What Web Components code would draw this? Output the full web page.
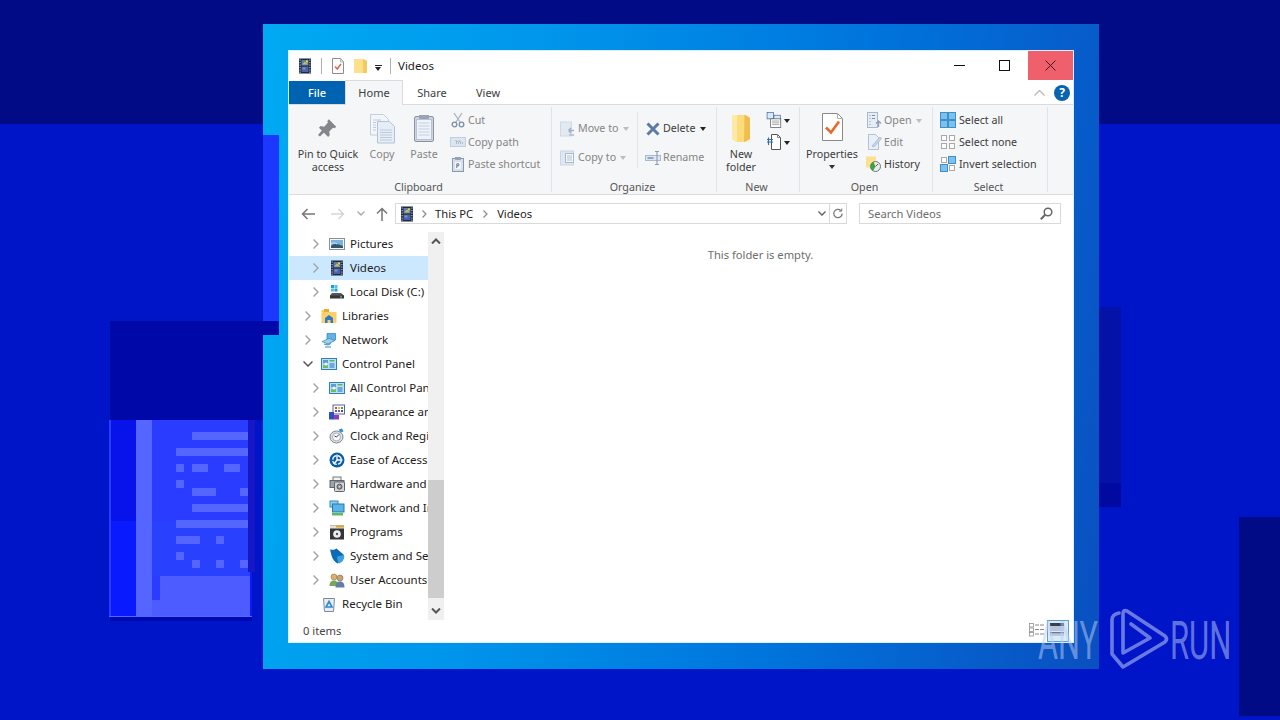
<!DOCTYPE html>
<html lang="en">
<head>
<meta charset="utf-8">
<title>Videos</title>
<style>
html,body{margin:0;height:100%;overflow:hidden;background:#0015c8;}
body{font:11.5px/1.2 "Noto Sans","Open Sans",sans-serif;color:#3c3c3c;}
</style>
</head>
<body>
<desk-top>
	<explorer-window slot="window">
		<title-bar>Videos</title-bar>
		<ribbon-tabs></ribbon-tabs>
		<ribbon-panel>
			<ribbon-group label="Clipboard" style="--w:263px;--pl:3px">
				<big-button icon="pin" width="72">Pin to Quick<br>access</big-button>
				<big-button icon="copy" width="36" off>Copy</big-button>
				<big-button icon="paste" width="48" off>Paste</big-button>
				<small-stack style="margin-left:2px">
					<small-button icon="cut" off>Cut</small-button>
					<small-button icon="copypath" off>Copy path</small-button>
					<small-button icon="pasteshort" off>Paste shortcut</small-button>
				</small-stack>
			</ribbon-group>
			<ribbon-group label="Organize" style="--w:165px;--pl:8px">
				<small-stack tall style="width:77px">
					<small-button icon="moveto" off arrow>Move to</small-button>
					<small-button icon="copyto" off arrow>Copy to</small-button>
				</small-stack>
				<group-sep></group-sep>
				<small-stack tall style="margin-left:7px">
					<small-button icon="delete" arrow>Delete</small-button>
					<small-button icon="rename" off>Rename</small-button>
				</small-stack>
			</ribbon-group>
			<ribbon-group label="New" style="--w:83px">
				<big-button icon="newfolder" width="48">New<br>folder</big-button>
				<small-stack style="margin-left:1px">
					<small-button icon="newitem" arrow></small-button>
					<small-button icon="easy" arrow></small-button>
				</small-stack>
			</ribbon-group>
			<ribbon-group label="Open" style="--w:133px">
				<big-button icon="props" width="64" drop>Properties</big-button>
				<small-stack style="margin-left:2px">
					<small-button icon="open" off arrow>Open</small-button>
					<small-button icon="edit" off>Edit</small-button>
					<small-button icon="history">History</small-button>
				</small-stack>
			</ribbon-group>
			<ribbon-group label="Select" style="--w:115px;--pl:7px">
				<small-stack>
					<small-button icon="selall" wide>Select all</small-button>
					<small-button icon="selnone" wide>Select none</small-button>
					<small-button icon="selinv" wide>Invert selection</small-button>
				</small-stack>
			</ribbon-group>
		</ribbon-panel>
		<address-row></address-row>
		<main-area>
			<nav-tree>
				<tree-row level="1" icon="pictures" arrow>Pictures</tree-row>
				<tree-row level="1" icon="film" arrow selected>Videos</tree-row>
				<tree-row level="1" icon="disk" arrow>Local Disk (C:)</tree-row>
				<tree-row level="0" icon="libraries" arrow>Libraries</tree-row>
				<tree-row level="0" icon="network" arrow>Network</tree-row>
				<tree-row level="0" icon="cpanel" arrow open>Control Panel</tree-row>
				<tree-row level="1" icon="cpanel" arrow>All Control Panel Items</tree-row>
				<tree-row level="1" icon="appearance" arrow>Appearance and Personalization</tree-row>
				<tree-row level="1" icon="clock" arrow>Clock and Region</tree-row>
				<tree-row level="1" icon="ease" arrow>Ease of Access</tree-row>
				<tree-row level="1" icon="hardware" arrow>Hardware and Sound</tree-row>
				<tree-row level="1" icon="netint" arrow>Network and Internet</tree-row>
				<tree-row level="1" icon="programs" arrow>Programs</tree-row>
				<tree-row level="1" icon="system" arrow>System and Security</tree-row>
				<tree-row level="1" icon="users" arrow>User Accounts</tree-row>
				<tree-row level="0" icon="recycle">Recycle Bin</tree-row>
			</nav-tree>
			<tree-scroll></tree-scroll>
			<empty-pane>This folder is empty.</empty-pane>
		</main-area>
		<status-bar>0 items</status-bar>
	</explorer-window>
</desk-top>

<script>
//icon shapes, all drawn in a 16 box unless noted
const ICONS = {
	film:`<rect x="2" y=".5" width="12" height="15" fill="#1c2740"/><g fill="#cfd6e4"><rect x="2.6" y="1.5" width="1" height="1.2"/><rect x="2.6" y="4" width="1" height="1.2"/><rect x="2.6" y="6.5" width="1" height="1.2"/><rect x="2.6" y="9" width="1" height="1.2"/><rect x="2.6" y="11.5" width="1" height="1.2"/><rect x="2.6" y="13.6" width="1" height="1.2"/><rect x="12.4" y="1.5" width="1" height="1.2"/><rect x="12.4" y="4" width="1" height="1.2"/><rect x="12.4" y="6.5" width="1" height="1.2"/><rect x="12.4" y="9" width="1" height="1.2"/><rect x="12.4" y="11.5" width="1" height="1.2"/><rect x="12.4" y="13.6" width="1" height="1.2"/></g><rect x="4.5" y="2" width="7" height="5.5" fill="#5c7ab8"/><path d="M5 6.5 8 3.5 11 6.5z" fill="#c9c23e"/><rect x="9" y="2.4" width="2" height="2" fill="#e4d24a"/><rect x="4.5" y="8.5" width="7" height="5.5" fill="#4a62a8"/><rect x="5.5" y="9.5" width="3" height="2" fill="#7d90c8"/>`,
	qatprops:`<path d="M2.500 .5h8l3 3.500v11.500h-11z" fill="#fff" stroke="#8d8d8d"/><path d="M10.500 .5V4h3" fill="none" stroke="#b5b5b5"/><path d="M5 8.500 7.300 11l3.600-5" fill="none" stroke="#d9694a" stroke-width="1.500"/>`,
	qatfolder:`<path d="M1 1h9l4 2v12H1z" fill="#fde08a"/><path d="M10 1v14h4V3z" fill="#f4c95d"/>`,
	pin:`<g fill="#83868c"><path d="M9.5 1 15 6.5 13.8 7.6 12.6 7.2 9.8 10l.4 2.8-1.2 1.2L2.2 7.2 3.4 6 6 6.4l2.8-2.8-.4-1.4z" transform="translate(4 6) scale(1.35)"/><path d="M6 23l7.5-8.8 2.6 2.4L8 24.4z"/></g>`,
	copy:`<path d="M4.500 2.500h13l5 5V23h-18z" fill="#f3f5f9" stroke="#c4cddb"/><path d="M11.500 9.500h12l5 5V31h-17z" fill="#e6edf7" stroke="#b4c2d6"/><g stroke="#bccadd"><path d="M14 18h12M14 20.500h12M14 23h12M14 25.500h12M14 28h12"/><path d="M7 8h8M7 10.500h3M7 13h3M7 15.500h3M7 18h3"/></g>`,
	paste:`<rect x="6.500" y="4.500" width="19" height="25" rx="1.500" fill="#cfd5df" stroke="#8a94a6"/><rect x="8.500" y="7.500" width="15" height="20" fill="#eef2f9" stroke="#b7c2d4"/><rect x="11" y="3" width="10" height="4" fill="#99a3b4"/><g stroke="#c5d0e0"><path d="M10.500 11h11M10.500 14h11M10.500 17h11M10.500 20h11M10.500 23h11"/></g>`,
	cut:`<g fill="none" stroke="#a8b2c2" stroke-width="1.300"><path d="M4 1l6 9M12 1 6 10"/><circle cx="4.500" cy="12.500" r="2.300" stroke="#7c8ea8"/><circle cx="11.500" cy="12.500" r="2.300" stroke="#7c8ea8"/></g>`,
	copypath:`<rect x=".5" y="3.500" width="15" height="9" fill="#dce6f3" stroke="#c2cfe0"/><path d="M6 9h.9M8 9h.9M10 9h.9M12 9h.9M6 6.500l1.500 1.500M9 6.500l1.500 1.500" stroke="#7b8794"/>`,
	pasteshort:`<rect x="2.500" y="2.500" width="11" height="13" fill="#d6deea" stroke="#8a98ad"/><rect x="5" y="1" width="6" height="3" fill="#98a4b6"/><rect x="5" y="6" width="6" height="7" fill="#f3f6fb"/><path d="M6.800 12V7.800h2v2h-2" fill="none" stroke="#6a7a92"/>`,
	moveto:`<rect x=".5" y="1" width="11" height="14" fill="#e2e9f3" stroke="#d0d9e6"/><path d="M14 9.500H8.500M8.500 9.500 11 7M8.500 9.500 11 12" fill="none" stroke="#9db0c8" stroke-width="1.500"/><rect x="9" y="13" width="5" height="2" fill="#b9c7d8"/>`,
	copyto:`<rect x=".5" y="1" width="13" height="14" fill="#dfe7f2" stroke="#ccd6e4"/><rect x="5.500" y="3.500" width="8" height="9" fill="#f3f6fa" stroke="#a9b8cb"/><path d="M7 6h5M7 8h5M7 10h5" stroke="#b5c2d3"/>`,
	delete:`<path d="M2.500 2.500 13.500 13.500M13.500 2.500 2.500 13.500" stroke="#5b7ba6" stroke-width="3"/>`,
	rename:`<rect x=".5" y="5.500" width="15" height="5" fill="#dde7f3" stroke="#aab9cc"/><rect x="2.500" y="7" width="6" height="2" fill="#8ba4c4"/><path d="M12 1.500V14.500M10 1.500h4M10 14.500h4" stroke="#8a9cb3" stroke-width="1.100"/>`,
	newfolder:`<path d="M2 3h13.500l4.500 3v21l-4 3H7l-5-3z" fill="#fddc7b"/><path d="M14.500 3h1l4.500 3v21l-6 3z" fill="#f0be4e"/><path d="M2 3v24l5 3V3z" fill="#fee9a8"/>`,
	newitem:`<g transform="scale(.72)"><rect x="1.500" y=".5" width="9" height="9" fill="#dbe8f7" stroke="#3f6e9e"/><rect x="11" y="4.500" width="9" height="9" fill="#dbe8f7" stroke="#3f6e9e"/><rect x="6.500" y="9.500" width="14" height="12" fill="#fff" stroke="#555"/><path d="M8.500 12.500h10M8.500 15h10M8.500 17.500h10" stroke="#8a8a8a"/></g>`,
	easy:`<path d="M5.500 .5h6l3 3V15.500h-9z" fill="#fff" stroke="#555"/><path d="M11.500.5v3h3" fill="none" stroke="#888"/><path d="M1 5.500h6M1 8h6M2.500 3.500V11" stroke="#2d6fb0" stroke-width="1.100"/>`,
	props:`<path d="M1.500 .5h15l5 5v22H1.500z" fill="#fff" stroke="#8a8a8a"/><path d="M16.500.5v5h5" fill="none" stroke="#b0b0b0"/><path d="M5 14.500l5 5 8-11" fill="none" stroke="#e5692f" stroke-width="2.600"/>`,
	open:`<rect x="1.500" y=".5" width="10" height="15" fill="#e7edf6" stroke="#aab8cc"/><path d="M3.500 3.500h1M3.500 6.500h1M3.500 9.500h1M3.500 12.500h1M6 3.500h3M6 6.500h3" stroke="#7e8fa8"/><path d="M12.500 15V9.500M10 11.500l2.500-2.500 2.500 2.500" fill="none" stroke="#8fa0b8" stroke-width="1.400"/>`,
	edit:`<path d="M2.500 .5h7l3 3v12h-10z" fill="#e9eff8" stroke="#b3c1d5"/><path d="M6 12l8-9 1.500 1.500L8 13z" fill="#c7d6ea" stroke="#9fb2cc" stroke-width=".7"/>`,
	history:`<rect x="0" y=".5" width="10" height="11" fill="#fbe08e"/><circle cx="9.500" cy="10.500" r="5" fill="#e9ecef" stroke="#6c7680"/><path d="M4.500 10.500a5 5 0 0 1 3-4.500l2 4.500-2.500 4.500a5 5 0 0 1-2.500-4.500z" fill="#3fa23a"/><path d="M9.500 10.500 12 8" stroke="#555"/>`,
	selall:`<g fill="#7cc0ee" stroke="#3e90c8"><rect x=".5" y=".5" width="7" height="7"/><rect x="8.500" y=".5" width="7" height="7"/><rect x=".5" y="8.500" width="7" height="7"/><rect x="8.500" y="8.500" width="7" height="7"/></g>`,
	selnone:`<g fill="#fff" stroke="#a9a9a9"><rect x="1.500" y="1.500" width="5" height="5"/><rect x="9.500" y="1.500" width="5" height="5"/><rect x="1.500" y="9.500" width="5" height="5"/><rect x="9.500" y="9.500" width="5" height="5"/></g>`,
	selinv:`<g stroke="#3e90c8" fill="#7cc0ee"><rect x="8.500" y=".5" width="7" height="7"/><rect x=".5" y="8.500" width="7" height="7"/></g><g fill="#fff" stroke="#a9a9a9"><rect x="1.500" y="1.500" width="5" height="5"/><rect x="9.500" y="9.500" width="5" height="5"/></g>`,
	pictures:`<rect x=".5" y="2.500" width="15" height="11" fill="#f4f6f8" stroke="#8a8f96"/><rect x="2" y="4" width="12" height="8" fill="#7cb3dc"/><path d="M2 10c3-3 7-2 12 0v2H2z" fill="#33566f"/><path d="M2 8c2-1.500 4-1.500 6 0" fill="none" stroke="#d7e7f2"/>`,
	disk:`<rect x="2" y="1" width="3" height="3" fill="#1aa0d8"/><rect x="5.500" y="1" width="3" height="3" fill="#56bde6"/><rect x="2" y="4.500" width="3" height="3" fill="#56bde6"/><rect x="5.500" y="4.500" width="3" height="3" fill="#1aa0d8"/><path d="M3 9h9l3 2.500V14H1v-2.500z" fill="#55595f"/><rect x="1" y="11.500" width="14" height="3" fill="#33363b"/><rect x="11" y="12.500" width="2" height="1" fill="#9edb6a"/>`,
	libraries:`<path d="M.5 2h6l1.500 2h7.500v11H.5z" fill="#fbcf6a"/><rect x="3" y="1" width="5" height="3" fill="#e8a93b"/><path d="M4 10l4-3 4 3v5H9.500v-3h-3v3H4z" fill="#2c7bc4"/>`,
	network:`<path d="M6 1.500h8.500V8L6 12z" fill="#62b5e3" stroke="#2f7fb8" stroke-width=".7"/><path d="M1 9.500l7-3 6 2-7 3.500z" fill="#9bd2ee" stroke="#3b89bd" stroke-width=".7"/><path d="M3 12l4 1 3-1.500M4 15h6" stroke="#3b89bd" fill="none"/>`,
	cpanel:`<rect x=".5" y="2.500" width="15" height="11" fill="#bfe0f4" stroke="#2f7fb8"/><rect x="2" y="4" width="5" height="3.500" fill="#57a0d6"/><rect x="8.500" y="4" width="5" height="1.500" fill="#5cb35c"/><rect x="2" y="9" width="5" height="3" fill="#6dbb6d"/><rect x="8.500" y="7" width="5" height="5" fill="#6aa9dc"/><circle cx="5" cy="8" r="1.500" fill="#fff"/>`,
	appearance:`<rect x="4" y="1" width="11.500" height="9" fill="#fff" stroke="#5566a8"/><g fill="#d6443e"><rect x="6" y="3" width="2" height="2"/></g><rect x="9" y="3" width="2" height="2" fill="#e6b93c"/><rect x="12" y="3" width="2" height="2" fill="#3e9e4e"/><rect x="6" y="6" width="2" height="2" fill="#3a68c8"/><rect x="9" y="6" width="2" height="2" fill="#8e4bb8"/><rect x="12" y="6" width="2" height="2" fill="#555"/><rect x="0" y="8" width="5" height="7.500" fill="#2d4fc0"/><rect x="5" y="11" width="5" height="4.500" fill="#8d3fb5"/>`,
	clock:`<ellipse cx="7.500" cy="9" rx="6.500" ry="6" fill="#dfe3e8" stroke="#7e8791"/><circle cx="7.500" cy="9" r="4" fill="#f7f8fa" stroke="#a5adb6"/><path d="M7.500 9 10 6.500M7.500 9 5.500 8" stroke="#444"/><path d="M9.500 1.500 13 .5l1.500 3-2.500 1z" fill="#3a88cc"/>`,
	ease:`<circle cx="8" cy="8" r="7.500" fill="#0c5da5"/><circle cx="8" cy="8" r="4.300" fill="none" stroke="#fff" stroke-width="1.300" stroke-dasharray="5.500 1.300"/><path d="M8 2.500V8M8 8h5.500M8 8l-3 4" stroke="#fff" stroke-width="1.300"/>`,
	hardware:`<rect x="4" y="1" width="8" height="4" fill="#f2f3f5" stroke="#777"/><rect x="1" y="4.500" width="14" height="7" fill="#9da3ab" stroke="#5e646c"/><rect x="5.500" y="6" width="10" height="9.500" rx="1" fill="#d3d7dc" stroke="#5e646c"/><circle cx="10.500" cy="10.700" r="2.500" fill="#8e959e" stroke="#555"/><circle cx="10.500" cy="10.700" r=".8" fill="#eee"/>`,
	netint:`<rect x="1" y="1" width="8" height="6" fill="#8fd0f0" stroke="#2f88c0"/><rect x="3.500" y="4" width="11.500" height="8" fill="#5cb3e6" stroke="#2478b0"/><rect x="3" y="13" width="11" height="2.500" fill="#5cba60"/>`,
	programs:`<rect x="1" y="1.500" width="14" height="14" fill="#32363a"/><rect x="1" y="1.500" width="14" height="3" fill="#e8e3c9"/><rect x="7" y="1.500" width="8" height="2" fill="#d6a63c"/><circle cx="8" cy="10" r="3.800" fill="#eceff2"/><circle cx="8" cy="10" r="1.200" fill="#4d5258"/>`,
	system:`<path d="M1 1.500c3 .5 4.500.5 6.500-1l7.500 6.500-1 3c-1 2.500-3 4.500-5.500 5.500C5.500 14 3.500 11 2.500 7.500z" fill="#0f6ab4"/><path d="M8 8.500l7-1.500c1 3-1 7-5 8.500-1-1-1.700-3-2-7z" fill="#35a2e2"/>`,
	users:`<circle cx="5" cy="5" r="3" fill="#d8b070" stroke="#8e7a4a" stroke-width=".6"/><path d="M.5 14c0-4 2-5.500 4.500-5.500S9.500 10 9.500 14z" fill="#79a55a"/><circle cx="11" cy="6" r="3" fill="#c6a27a" stroke="#7e6a4a" stroke-width=".6"/><path d="M6.500 15.500c0-4.500 2-6 4.500-6s4.500 1.500 4.500 6z" fill="#5f7fa8"/>`,
	recycle:`<path d="M2.500 2.500h11l-1 13h-9z" fill="#e8edf3" stroke="#7d8a99"/><path d="M8 5.500 11 11H5z" fill="none" stroke="#2f8ad0" stroke-width="1.600"/>`,
	viewlist:`<g fill="#fff" stroke="#8f8f8f" stroke-width=".8"><rect x=".5" y=".5" width="4" height="3.500"/><rect x=".5" y="5" width="4" height="3.500"/><rect x=".5" y="9.500" width="4" height="3.500"/></g><path d="M6 2h4M11 2h4M6 6.500h4M11 6.500h4M6 11h4M11 11h4" stroke="#888"/>`,
	viewlarge:`<rect x="0" y="0" width="14" height="3" fill="#3a3f49"/><rect x="0" y="3" width="14" height="5" fill="#b2c4dc"/><rect x="0" y="9" width="14" height="1.500" fill="#6b7a8f"/><rect x="0" y="11.500" width="14" height="1" fill="#9aa5b5"/>`,
};
const BIG = new Set(["pin","copy","paste"]);
const HUGE = {newfolder:[22,32],props:[23,30]};

class UiIcon extends HTMLElement{ constructor(){
	super();
	const name = this.getAttribute("name");
	const [w,h] = HUGE[name] || (BIG.has(name) ? [32,32] : [16,16]);
	this.attachShadow({mode:"open"}).innerHTML = `<style>:host{display:inline-flex;flex:none}svg{display:block}</style>
	<svg width="${w}" height="${h}" viewBox="0 0 ${w} ${h}">${ICONS[name]||""}</svg>`;
}}
customElements.define("ui-icon",UiIcon);

//generic helper: class with only a shadow root
const simple = (tag,html)=>customElements.define(tag,class extends HTMLElement{ constructor(){
	super();
	this.attachShadow({mode:"open"}).innerHTML = html;
}});

class DeskTop extends HTMLElement{ constructor(){
	super();
	//wallpaper ghost: x,y,w,h,colour
	const L = "#5565ff";
	const rects = [
		[0,0,1280,124,"#000b85"],
		[1099,307,22,200,"#0412a8"],[1099,483,22,24,"#0009a0"],
		[1239,517,41,199,"#000b85"],
		[109,420,143,197,"#0a1aff"],[109,420,143,101,"#0713ea"],
		[136,420,16,197,L],[152,420,98,156,"#2a3cff"],[152,521,98,55,"#2a40ff"],
		[160,576,90,41,"#4d5cff"],[152,600,8,17,"#4d5cff"],[152,576,8,24,"#2a3cff"],
		[109,420,2,197,"#2a3cff"],[109,616,143,1,"#5565ff"],
		[192,432,60,8,L],[176,448,76,8,L],[176,464,8,8,L],[192,464,16,8,L],[224,464,16,8,L],[248,464,4,8,L],
		[176,480,8,8,L],[192,488,24,8,L],[240,488,12,8,L],[192,504,60,8,L],[176,520,76,8,L],
		[176,536,24,8,L],[216,536,8,8,L],[248,536,4,8,L],[176,552,8,8,L],[192,560,8,8,L],[216,560,8,8,L],[240,560,12,8,L],
		[248,420,7,152,"#1518c4"],[110,617,142,4,"#0009b0"],
		[110,321,168,99,"#0008a8"],
		[263,135,16,186,"#1c38ff"],
	].map(([x,y,w,h,c])=>`<rect x="${x}" y="${y}" width="${w}" height="${h}" fill="${c}"/>`).join("");
	this.attachShadow({mode:"open"}).innerHTML = `<style>
	:host{display:block;position:relative;width:1280px;height:720px;overflow:hidden;background:#0015c8}
	svg{position:absolute;left:0;top:0}
	.frame{position:absolute;left:263px;top:24px;width:836px;height:645px;background:linear-gradient(100deg,#00aaf2 0%,#0096ec 30%,#0074dc 65%,#0a4fc0 100%)}
	.patch{position:absolute;left:263px;top:135px;width:16px;height:200px;background:#1c38ff}
	.patch i{display:block;margin-top:186px;height:14px;background:#0008a8}
	.win{position:absolute;left:288px;top:50px}
	.mark{position:absolute;left:0;top:0;pointer-events:none;color:rgba(190,205,245,.52);font:400 53px/60px Roboto,sans-serif}
	.mark span{position:absolute;top:611px;transform-origin:0 50%}
	.mark svg{left:1105px;top:607px}
	</style>
	<svg width="1280" height="720">${rects}</svg>
	<div class="frame"></div>
	<div class="patch"><i></i></div>
	<div class="win"><slot name="window"></slot></div>
	<div class="mark"><span style="left:1038px;transform:scaleX(.58)">ANY</span><span style="left:1170px;transform:scaleX(.585)">RUN</span>
	<svg width="64" height="66" viewBox="0 0 64 66" fill="none" stroke="rgba(190,205,245,.55)" stroke-width="3.600" stroke-linejoin="round" stroke-linecap="round">
		<path d="M14 6C9 7 7 9 7 13V47L18 60 60 35C62 33 62 31 60 29L22 4C19 3 18 4 18 7V46L45 31 26 17"/>
	</svg></div>`;
}}
customElements.define("desk-top",DeskTop);

simple("explorer-window",`<style>
	:host{display:flex;flex-direction:column;box-sizing:border-box;width:786px;height:593px;background:#fff;border:1px solid #d8f0fc}
	</style><slot></slot>`);

simple("title-bar",`<style>
	:host{display:flex;align-items:center;height:30px;flex:none;font-size:11.500px;color:#1a1a1a}
	.qat{display:flex;align-items:center;padding-left:8px}
	.sep{width:1px;height:16px;background:#b0b0b0}
	.drop{width:7px;height:5px;border-top:1px solid #222;position:relative;margin:2px 0 0 6px;box-sizing:border-box}
	.drop::after{content:"";display:block;margin:1px 0 0 0;border:3.500px solid transparent;border-top:4px solid #222;border-bottom:0;width:0}
	.t{margin-left:7px;flex:1}
	.btn{width:45px;height:29px;display:flex;align-items:center;justify-content:center;align-self:flex-start}
	.btn.shift svg{margin-right:3px}
	.close{background:#f0606c}
	</style>
	<div class="qat">
		<ui-icon name="film"></ui-icon>
		<div class="sep" style="margin:0 8px"></div>
		<ui-icon name="qatprops"></ui-icon>
		<span style="width:7px"></span>
		<ui-icon name="qatfolder"></ui-icon>
		<div class="drop"></div>
		<div class="sep" style="margin-left:8px"></div>
	</div>
	<div class="t"><slot></slot></div>
	<div class="btn shift"><svg width="11" height="11"><path d="M0 5.500h11" stroke="#111"/></svg></div>
	<div class="btn shift"><svg width="11" height="11"><rect x=".5" y=".5" width="10" height="10" fill="none" stroke="#111"/></svg></div>
	<div class="btn close"><svg width="11" height="11"><path d="M.5.500l10 10M10.500.500l-10 10" stroke="#3d1a1f"/></svg></div>`);

simple("ribbon-tabs",`<style>
	:host{display:flex;flex:none;border-bottom:1px solid #dadbdc;box-sizing:border-box;height:24px;font-size:11px;color:#3c3c3c}
	div{display:flex;align-items:center;justify-content:center;height:23px}
	.file{width:56px;background:#0063b1;color:#fff;font-weight:500}
	.home{width:56px;height:24px;background:#f5f6f7;border:1px solid #dadbdc;border-bottom:0;margin-top:-1px}
	.tab{width:58px}
	.sp{flex:1}
	.help{width:16px;height:16px;border-radius:50%;background:#0a63b0;color:#fff;font:700 12px/16px "Noto Sans",sans-serif;margin-right:3px;align-self:center}
	svg{display:block;margin-right:9px;align-self:center}
	</style>
	<div class="file">File</div><div class="home">Home</div><div class="tab">Share</div><div class="tab" style="margin-left:-2px">View</div>
	<div class="sp"></div>
	<svg width="11" height="6"><path d="M.5 5.500 5.500.5l5 5" fill="none" stroke="#b8b8b8" stroke-width="1.300"/></svg>
	<div class="help">?</div>`);

simple("ribbon-panel",`<style>
	:host{display:flex;flex:none;background:#f5f6f7;border-bottom:1px solid #dadbdc;box-sizing:border-box;height:90px}
	</style><slot></slot>`);

class RibbonGroup extends HTMLElement{ constructor(){
	super();
	this.attachShadow({mode:"open"}).innerHTML = `<style>
	:host{display:flex;flex-direction:column;width:var(--w);flex:none;box-sizing:border-box;border-right:1px solid #e1e3e6;margin:2px 0}
	.body{flex:1;display:flex;padding-left:var(--pl,0);margin-top:-2px;min-height:0}
	.lab{height:15px;text-align:center;line-height:14px;color:#555;font-size:10.700px;margin-bottom:-3px;padding-right:3px}
	</style><div class="body"><slot></slot></div><div class="lab">${this.getAttribute("label")}</div>`;
}}
customElements.define("ribbon-group",RibbonGroup);

class BigButton extends HTMLElement{ constructor(){
	super();
	const drop = this.hasAttribute("drop") ? `<i></i>` : "";
	this.attachShadow({mode:"open"}).innerHTML = `<style>
	:host{display:flex;flex-direction:column;align-items:center;width:${this.getAttribute("width")}px;flex:none;padding-top:7px;box-sizing:border-box;font-size:10.700px;line-height:13px;text-align:center;color:${this.hasAttribute("off")?"#858585":"#3c3c3c"}}
	.ic{height:32px;display:flex;align-items:center;justify-content:center;margin-bottom:4px}
	i{display:block;width:0;border:3px solid transparent;border-top:4px solid #333;border-bottom:0;margin-top:4px}
	</style><div class="ic"><ui-icon name="${this.getAttribute("icon")}"></ui-icon></div><div><slot></slot></div>${drop}`;
}}
customElements.define("big-button",BigButton);

class SmallStack extends HTMLElement{ constructor(){
	super();
	const tall = this.hasAttribute("tall");
	this.attachShadow({mode:"open"}).innerHTML = `<style>
	:host{display:flex;flex-direction:column;flex:none;padding-top:${tall?9:4}px;--row:${tall?29:22}px}
	</style><slot></slot>`;
}}
customElements.define("small-stack",SmallStack);

class SmallButton extends HTMLElement{ constructor(){
	super();
	const off = this.hasAttribute("off");
	const gap = this.textContent.trim() ? 4 : 0;
	const arrow = this.hasAttribute("arrow") ? `<i style="border-top-color:${off?"#bdbdbd":"#222"};margin-left:${gap}px"></i>` : "";
	this.attachShadow({mode:"open"}).innerHTML = `<style>
	:host{display:flex;align-items:center;height:var(--row,22px);font-size:10.700px;white-space:nowrap;color:${off?"#858585":"#3c3c3c"}}
	ui-icon{margin-right:${this.hasAttribute("wide")?3:2}px}
	i{display:block;width:0;border:3px solid transparent;border-top:4px solid;border-bottom:0;margin-top:1px}
	</style><ui-icon name="${this.getAttribute("icon")}"></ui-icon><slot></slot>${arrow}`;
}}
customElements.define("small-button",SmallButton);

simple("group-sep",`<style>:host{display:block;flex:none;width:1px;height:56px;margin-top:7px;background:#e1e3e6}</style>`);

simple("address-row",`<style>
	:host{display:flex;align-items:center;height:37px;flex:none;box-sizing:border-box;padding:0 13px 0 5px;font-size:11.200px;color:#222}
	.nav{display:flex;align-items:center;justify-content:center;flex:none}
	.box{display:flex;align-items:center;box-sizing:border-box;height:21px;border:1px solid #d9d9d9;flex:none}
	.addr{width:452px;padding-left:3px}
	.crumb{margin:0 6px}
	.end{margin-left:auto;display:flex;align-items:center;height:100%}
	.search{width:202px;margin-left:12px;padding:0 7px 0 8px;justify-content:space-between;color:#6d6d6d}
	svg{display:block}
	</style>
	<div class="nav" style="width:28px"><svg width="14" height="12" fill="none" stroke="#777" stroke-width="1.500"><path d="M14 6H1.500M6.500 1 1.500 6l5 5"/></svg></div>
	<div class="nav" style="width:32px"><svg width="14" height="12" fill="none" stroke="#d6d6d6" stroke-width="1.500"><path d="M0 6h12.500M7.500 1l5 5-5 5"/></svg></div>
	<div class="nav" style="width:14px"><svg width="8" height="5" fill="none" stroke="#a9a9a9" stroke-width="1.300"><path d="M.5.500l3.500 3.500L7.500.5"/></svg></div>
	<div class="nav" style="width:27px"><svg width="12" height="14" fill="none" stroke="#777" stroke-width="1.500"><path d="M6 14V1.500M1 6.500l5-5 5 5"/></svg></div>
	<div class="box addr">
		<ui-icon name="film"></ui-icon>
		<svg class="crumb" width="5" height="8" fill="none" stroke="#8a8a8a" stroke-width="1.200" style="margin-left:7px"><path d="M.5.500 4 4 .5 7.500"/></svg>
		<span style="margin-left:2px">This PC</span>
		<svg class="crumb" width="5" height="8" fill="none" stroke="#8a8a8a" stroke-width="1.200" style="margin-left:10px;margin-right:9px"><path d="M.5.500 4 4 .5 7.500"/></svg>
		<span>Videos</span>
		<div class="end">
			<svg width="8" height="5" viewBox="0 0 10 6" fill="none" stroke="#666" stroke-width="1.800" style="margin-right:3px"><path d="M.5.500 5 5 9.500.5"/></svg>
			<div style="width:1px;height:100%;background:#d9d9d9;margin-right:3px"></div>
			<svg width="10" height="11" viewBox="0 0 12 13" fill="none" stroke="#777" stroke-width="1.500" style="margin-right:3px"><path d="M9.500 3A5 5 0 1 0 11 6.500"/><path d="M10.500.5v3.200H7.300" stroke-width="1.200"/></svg>
		</div>
	</div>
	<div class="box search"><span>Search Videos</span><svg width="13" height="13" fill="none" stroke="#666" stroke-width="1.500"><circle cx="8" cy="5" r="3.800"/><path d="M5.200 7.800.8 12.200" stroke-width="2"/></svg></div>`);

simple("main-area",`<style>:host{display:flex;flex:1;min-height:0}</style><slot></slot>`);
simple("nav-tree",`<style>:host{display:block;width:139px;flex:none;overflow:hidden}</style><slot></slot>`);

class TreeRow extends HTMLElement{ constructor(){
	super();
	const lv = this.getAttribute("level")|0;
	const open = this.hasAttribute("open");
	const chev = !this.hasAttribute("arrow") ? "" : open
		? `<svg width="10" height="6" fill="none" stroke="#555" stroke-width="1.500"><path d="M.5.500 5 5 9.500.5"/></svg>`
		: `<svg width="6" height="10" fill="none" stroke="#a6a6a6" stroke-width="1.500"><path d="M.5.500 5 5 .5 9.500"/></svg>`;
	this.attachShadow({mode:"open"}).innerHTML = `<style>
	:host{display:flex;align-items:center;height:24px;white-space:nowrap;overflow:hidden;font-size:11.500px;color:#222;background:${this.hasAttribute("selected")?"#cce8ff":"transparent"}}
	.a{width:10px;margin-left:${14+lv*8}px;margin-right:8px;flex:none;display:flex;justify-content:center}
	.t{margin-left:5px}
	</style><div class="a">${chev}</div><ui-icon name="${this.getAttribute("icon")}"></ui-icon><div class="t"><slot></slot></div>`;
}}
customElements.define("tree-row",TreeRow);

simple("tree-scroll",`<style>
	:host{display:flex;flex-direction:column;width:16px;height:388px;flex:none;background:#f0f0f0}
	.b{height:18px;display:flex;align-items:center;justify-content:center;flex:none}
	.s{flex:1}
	.th{height:118px;background:#cdcdcd;flex:none}
	.end{height:22px;box-sizing:border-box;padding-top:3px}
	</style>
	<div class="b"><svg width="10" height="6" fill="none" stroke="#555" stroke-width="2"><path d="M1 5.500 5 1.500l4 4"/></svg></div>
	<div class="s"></div><div class="th"></div>
	<div class="b end"><svg width="10" height="6" fill="none" stroke="#555" stroke-width="2"><path d="M1 .5l4 4 4-4"/></svg></div>`);

simple("empty-pane",`<style>
	:host{display:block;flex:1;text-align:center;padding:16px 0 0 4px;font-size:11.200px;line-height:14px;color:#6d6d6d}
	</style><slot></slot>`);

simple("status-bar",`<style>
	:host{display:flex;align-items:center;height:22px;flex:none;padding-left:14px;font-size:11.200px;color:#444}
	.sp{flex:1}
	.sel{display:flex;align-items:center;justify-content:center;box-sizing:border-box;width:22px;height:22px;margin:0 4px 0 2px;background:#d9ebf9;border:1px solid #5f9ec8}
	</style><slot></slot><div class="sp"></div>
	<ui-icon name="viewlist"></ui-icon>
	<div class="sel"><ui-icon name="viewlarge"></ui-icon></div>`);
</script>
</body>
</html>
